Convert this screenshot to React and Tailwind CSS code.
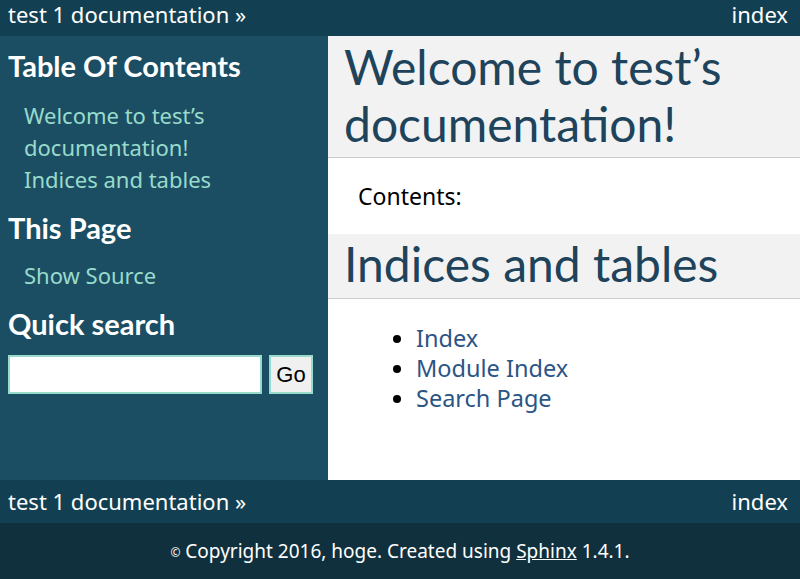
export default function App() {
  const bar = (
    <div className="flex h-full items-center justify-between px-2 text-[22px] text-white">
      <span>test 1 documentation »</span>
      <span className="pr-[4px]">index</span>
    </div>
  )

  return (
    <div className="min-h-screen bg-[#11303d] font-['Noto_Sans','Liberation_Sans',sans-serif]">
      {/* Top related bar */}
      <div className="h-[36px] bg-[#133f52] pb-[7px]">{bar}</div>

      <div className="flex h-[444px]">
        {/* Sidebar */}
        <aside className="w-[328px] shrink-0 bg-[#1c4e63] px-2 text-[#98dbcc]">
          <h3 className="mt-[12px] text-[29px] leading-[36px] text-white font-['Lato',sans-serif] font-bold">Table Of Contents</h3>
          <ul className="mt-[15px] pl-4 text-[22px] leading-[32px]">
            <li>Welcome to test’s<br />documentation!</li>
            <li>Indices and tables</li>
          </ul>
          <h3 className="mt-[15px] text-[29px] leading-[36px] text-white font-['Lato',sans-serif] font-bold">This Page</h3>
          <ul className="mt-[13px] pl-4 text-[22px] leading-[32px]">
            <li>Show Source</li>
          </ul>
          <h3 className="mt-[15px] text-[29px] leading-[36px] text-white font-['Lato',sans-serif] font-bold">Quick search</h3>
          <div className="mt-[13px] flex gap-[7px]">
            <input className="h-[39px] w-[254px] border-2 border-[#98dbcc] bg-white" />
            <button className="h-[39px] w-[44px] border-2 border-[#98dbcc] bg-[#f0f0f0] text-[22px] text-black font-['Liberation_Sans',sans-serif]">Go</button>
          </div>
        </aside>

        {/* Main body */}
        <main className="flex-1 bg-white">
          <h1 className="border-b border-[#cccccc] bg-[#f2f2f2] pt-[2px] pb-[5px] pl-4 text-[48px] leading-[57px] text-[#20435c] font-['Lato',sans-serif]">
            Welcome to test’s documentation!
          </h1>
          <p className="mt-[22px] pl-[30px] text-[23px] leading-[32px] text-black">Contents:</p>
          <h2 className="mt-[22px] border-b border-[#cccccc] bg-[#f2f2f2] pt-[2px] pb-[6px] pl-4 text-[48px] leading-[56px] text-[#20435c] font-['Lato',sans-serif]">
            Indices and tables
          </h2>
          <ul className="mt-[24px] list-disc pl-[88px] text-[23.5px] leading-[30px] text-[#2b5585] marker:text-black">
            <li>Index</li>
            <li>Module Index</li>
            <li>Search Page</li>
          </ul>
        </main>
      </div>

      {/* Bottom related bar */}
      <div className="h-[43px] bg-[#133f52]">{bar}</div>

      {/* Footer */}
      <footer className="flex h-[56px] items-center justify-center text-[19px] text-white">
        <span>
          <span className="text-[12px] align-middle">©</span> Copyright 2016, hoge. Created using{' '}
          <span className="underline">Sphinx</span> 1.4.1.
        </span>
      </footer>
    </div>
  )
}
